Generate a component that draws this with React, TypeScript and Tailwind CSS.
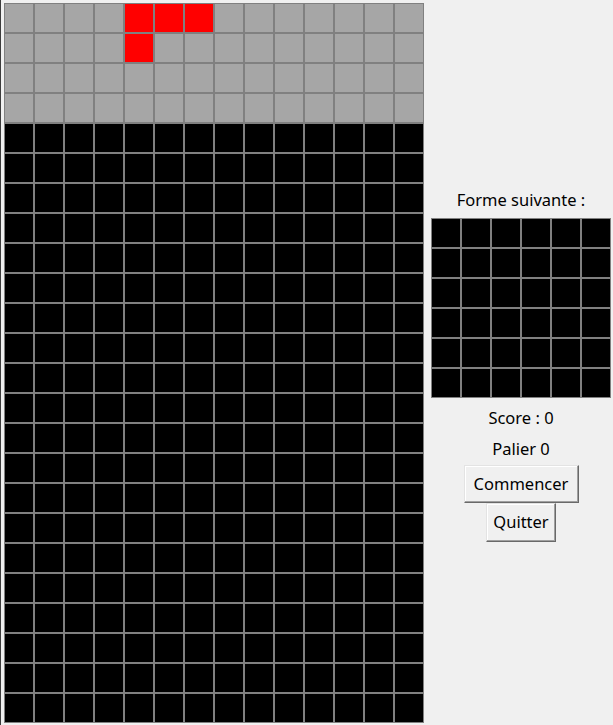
import React from 'react';

const COLS = 14;
const ROWS = 24;
const HIDDEN_ROWS = 4;

// piece en cours, coordonnees [ligne, colonne]
const piece: [number, number][] = [
  [0, 4],
  [0, 5],
  [0, 6],
  [1, 4],
];

const cellColor = (r: number, c: number) => {
  if (piece.some(([pr, pc]) => pr === r && pc === c)) return 'bg-[#ff0000]';
  if (r < HIDDEN_ROWS) return 'bg-[#a6a6a6]';
  return 'bg-black';
};

const Board: React.FC = () => (
  <div className="grid grid-cols-[repeat(14,30px)] w-[420px]">
    {Array.from({ length: ROWS * COLS }).map((_, i) => {
      const r = Math.floor(i / COLS);
      const c = i % COLS;
      return <div key={i} className={`w-[30px] h-[30px] border border-[#808080] ${cellColor(r, c)}`} />;
    })}
  </div>
);

const Preview: React.FC = () => (
  <div className="grid grid-cols-[repeat(6,30px)] w-[180px]">
    {Array.from({ length: 36 }).map((_, i) => (
      <div key={i} className="w-[30px] h-[30px] border border-[#808080] bg-black" />
    ))}
  </div>
);

const TkButton: React.FC<{ label: string; className: string }> = ({ label, className }) => (
  <button
    className={`flex items-center justify-center bg-[#f0f0f0] border border-t-[#e3e3e3] border-l-[#e3e3e3] border-b-[#696969] border-r-[#696969] shadow-[inset_-1px_-1px_0_#a0a0a0,inset_1px_1px_0_#ffffff] text-[16.5px] text-black ${className}`}
  >
    {label}
  </button>
);

export default function App() {
  return (
    <div
      className="w-[613px] h-[725px] bg-[#f0f0f0] flex border-l border-[#3c3c3c] overflow-hidden"
      style={{ fontFamily: '"Noto Sans", "Open Sans", sans-serif' }}
    >
      <div className="pl-[3px] pt-[3px]">
        <Board />
      </div>

      <div className="flex-1 flex flex-col items-center pl-[5px] pt-[190px]">
        <div className="h-[20px] leading-[20px] text-[16.5px] text-black">Forme suivante :</div>
        <div className="mt-[8px]">
          <Preview />
        </div>
        <div className="mt-[10px] h-[20px] leading-[20px] text-[16.5px] text-black">Score : 0</div>
        <div className="mt-[11px] h-[20px] leading-[20px] text-[16.5px] text-black">Palier 0</div>
        <TkButton label="Commencer" className="mt-[6px] w-[115px] h-[38px]" />
        <TkButton label="Quitter" className="w-[70px] h-[39px]" />
      </div>
    </div>
  );
}
